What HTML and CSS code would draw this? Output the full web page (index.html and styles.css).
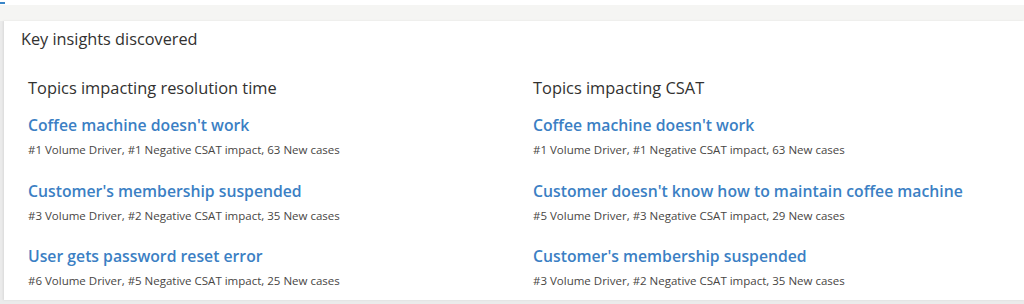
FILE: index.html
```html
<!DOCTYPE html>
<html>
<head>
<meta charset="utf-8">
<link rel="stylesheet" href="styles.css">
</head>
<body>
<div class="tabmark"></div>
<div class="band"></div>
<section class="card">
  <h1 class="card-title">Key insights discovered</h1>
  <div class="cols">
    <div class="col">
      <h2 class="col-title">Topics impacting resolution time</h2>
      <div class="item">
        <a class="item-link">Coffee machine doesn't work</a>
        <div class="item-meta">#1 Volume Driver, #1 Negative CSAT impact, 63 New cases</div>
      </div>
      <div class="item">
        <a class="item-link">Customer's membership suspended</a>
        <div class="item-meta">#3 Volume Driver, #2 Negative CSAT impact, 35 New cases</div>
      </div>
      <div class="item">
        <a class="item-link">User gets password reset error</a>
        <div class="item-meta">#6 Volume Driver, #5 Negative CSAT impact, 25 New cases</div>
      </div>
    </div>
    <div class="col">
      <h2 class="col-title">Topics impacting CSAT</h2>
      <div class="item">
        <a class="item-link">Coffee machine doesn't work</a>
        <div class="item-meta">#1 Volume Driver, #1 Negative CSAT impact, 63 New cases</div>
      </div>
      <div class="item">
        <a class="item-link">Customer doesn't know how to maintain coffee machine</a>
        <div class="item-meta">#5 Volume Driver, #3 Negative CSAT impact, 29 New cases</div>
      </div>
      <div class="item">
        <a class="item-link">Customer's membership suspended</a>
        <div class="item-meta">#3 Volume Driver, #2 Negative CSAT impact, 35 New cases</div>
      </div>
    </div>
  </div>
</section>
</body>
</html>
```
FILE: styles.css
```css
html, body {
  margin: 0;
  padding: 0;
}
body {
  width: 1024px;
  height: 304px;
  background: #ebebeb;
  font-family: "Open Sans", "Noto Sans", sans-serif;
  color: #323130;
  overflow: hidden;
  position: relative;
}
.tabmark {
  position: absolute;
  left: 0;
  top: 2px;
  width: 5px;
  height: 2px;
  background: #3a86c8;
}
.band {
  height: 16px;
  background: #f5f5f3;
  border-top: 5px solid #ffffff;
}
.card {
  margin-left: 4px;
  height: 279px;
  background: #ffffff;
  box-shadow: -1px 0 2px rgba(0,0,0,0.08);
  padding: 7px 0 0 17px;
  box-sizing: border-box;
}
.card-title {
  margin: 0;
  font-size: 16.3px;
  font-weight: 400;
  line-height: 22px;
  color: #323130;
}
.cols {
  display: grid;
  grid-template-columns: 505px 1fr;
  padding-left: 7px;
  margin-top: 27px;
}
.col-title {
  margin: 0 0 14px;
  font-size: 16.4px;
  font-weight: 500;
  line-height: 22px;
  color: #323130;
}
.item {
  height: 65.5px;
}
.item-link {
  display: block;
  font-size: 15.75px;
  font-weight: 600;
  line-height: 24px;
  color: #3b7fc4;
}
.item-meta {
  font-size: 11.5px;
  line-height: 18px;
  color: #484644;
  margin-top: 4px;
}
```
